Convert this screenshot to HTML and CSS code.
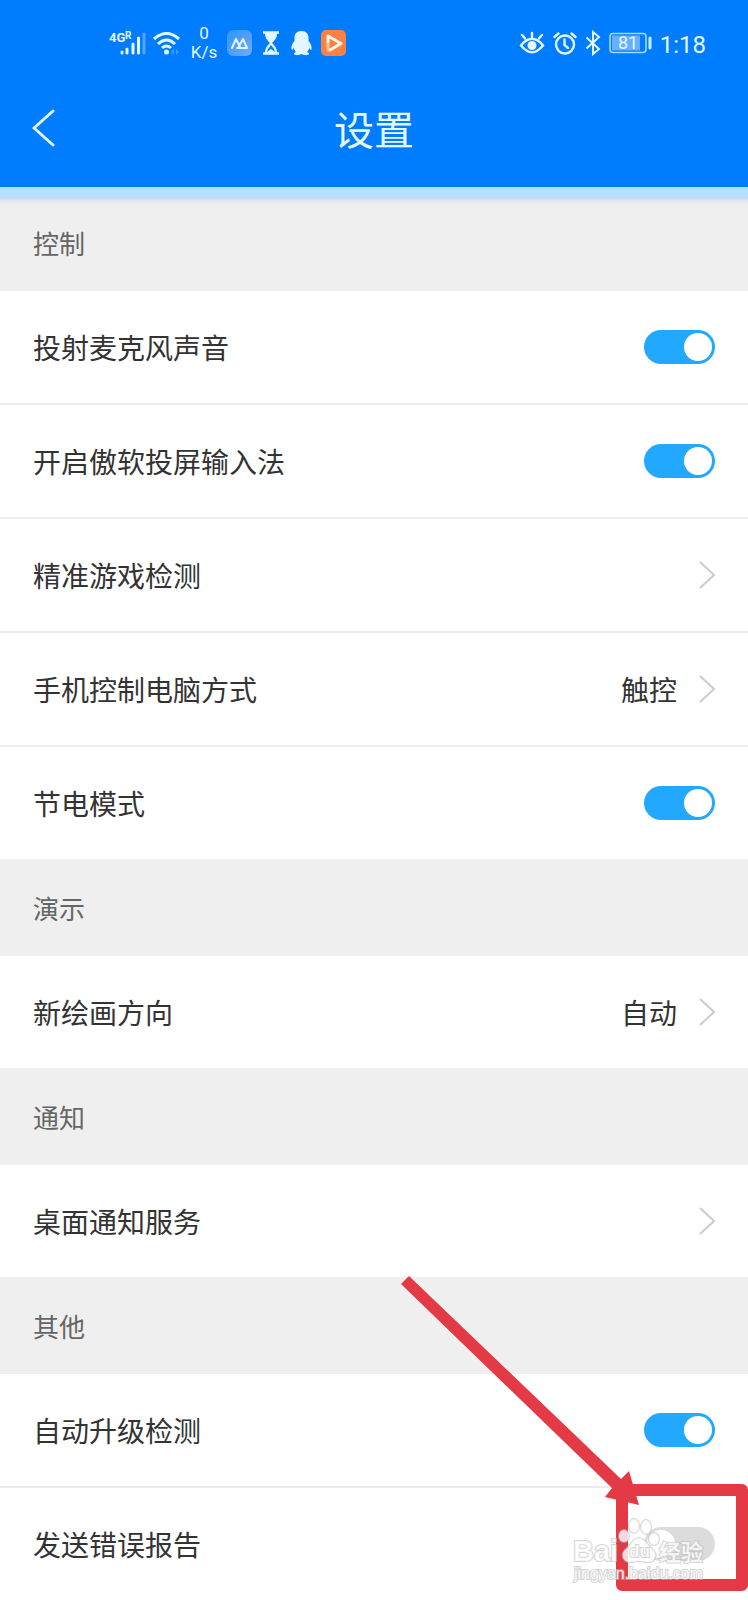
FILE: index.html
```html
<!DOCTYPE html>
<html lang="zh-CN">
<head>
    <meta charset="UTF-8">
    <meta name="viewport" content="width=device-width, initial-scale=1">
    <title>设置</title>
    <link rel="stylesheet" href="styles.css">
</head>
<body>
<div class="page">
    <header class="header">
        <!--状态栏-->
        <div class="status_bar">
            <div class="status_left">
                <svg class="signal" width="40" height="28" viewBox="0 0 40 28">
                    <text x="1" y="13" class="net_text">4G</text>
                    <text x="17" y="10" class="r_text">R</text>
                    <g stroke="#e3f7ff" stroke-width="3" stroke-linecap="round">
                        <path d="M14 23v1M19 20v4M25 15v9M30.500 9v15"/>
                        <path d="M36 5v19" opacity=".35"/>
                    </g>
                </svg>
                <svg class="wifi" width="28" height="28" viewBox="0 0 28 28">
                    <g fill="none" stroke="#e3f7ff" stroke-width="3">
                        <path d="M1 10Q13.500-1 26 10"/>
                        <path d="M5 15Q13.500 7 22 15"/>
                        <path d="M9 19Q13.500 15 18 19"/>
                    </g>
                    <circle cx="13.500" cy="23" r="2.500" fill="#e3f7ff"/>
                    <path d="M21 20v6l-3-3zM23 20v6l3-3z" fill="#3d9dff"/>
                </svg>
                <div class="speed"><span>0</span><span>K/s</span></div>
                <svg class="app" width="25" height="26" viewBox="0 0 25 26">
                    <defs>
                        <linearGradient id="blueApp" x1="0" y1="0" x2="1" y2="1">
                            <stop offset="0" stop-color="#2b95ff"/>
                            <stop offset="1" stop-color="#76a8ff"/>
                        </linearGradient>
                    </defs>
                    <rect width="25" height="26" rx="6" fill="url(#blueApp)"/>
                    <path d="M5 18L9 9l4 8M10 18h10L16 9l-5 9" fill="none" stroke="#e3f3ff" stroke-width="2" stroke-linejoin="round" stroke-linecap="round"/>
                </svg>
                <svg class="hourglass" width="18" height="24" viewBox="0 0 18 24">
                    <path d="M1 1.500h16M1 22.500h16" stroke="#e3f7ff" stroke-width="2.500"/>
                    <path d="M3 2h12c0 5-2 7-5 10 3 3 5 5 5 10H3c0-5 2-7 5-10C5 9 3 7 3 2z" fill="#e3f7ff"/>
                    <path d="M9 14l-3 4-1 3 4-3 4 3-1-3z" fill="#007cff"/>
                </svg>
                <svg class="penguin" width="21" height="26" viewBox="0 0 21 26">
                    <path d="M10.500 1C5.500 1 3.500 4 3.500 8v3C1.500 13 0 16 .5 19c.2 1.500 1 1 2.300-1 .4 1.800 1.200 3 2.200 4-1.500.5-2.300 1.200-2 2 .5 1.500 5 1.500 7.500 0 2.500 1.500 7 1.500 7.500 0 .3-.8-.5-1.500-2-2 1-1 1.800-2.200 2.200-4 1.300 2 2.100 2.500 2.300 1 .5-3-1-6-3-8V8c0-4-2-7-7-7z" fill="#e3f7ff"/>
                </svg>
                <svg class="app" width="25" height="26" viewBox="0 0 25 26">
                    <rect width="25" height="26" rx="5" fill="#fb8144"/>
                    <path d="M7 12V6l13 7.500L9 20" fill="none" stroke="#fff4e8" stroke-width="3" stroke-linejoin="round" stroke-linecap="round"/>
                    <path d="M7 14v6" stroke="#ffc49c" stroke-width="3" stroke-linecap="round"/>
                </svg>
            </div>
            <div class="status_right">
                <svg class="eye" width="26" height="26" viewBox="0 0 26 26">
                    <g fill="none" stroke="#e3f7ff" stroke-width="2.400" stroke-linecap="round">
                        <path d="M2 15.500Q13 2 24 15.500 13 29 2 15.500z"/>
                        <path d="M13 7V3M6 8.500L3 5M20 8.500L23 5"/>
                    </g>
                    <circle cx="13" cy="15.500" r="4.500" fill="#e3f7ff"/>
                </svg>
                <svg class="alarm" width="24" height="26" viewBox="0 0 24 26">
                    <g fill="none" stroke="#e3f7ff" stroke-width="2.400" stroke-linecap="round">
                        <circle cx="12" cy="14.500" r="9"/>
                        <path d="M1.500 7l4-3.500M22.500 7l-4-3.500M11.500 9.500V15l3.500 3"/>
                    </g>
                </svg>
                <svg class="bluetooth" width="16" height="26" viewBox="0 0 16 26">
                    <path d="M1.500 7.500L14 19l-6 5V2l6 5L1.500 18.500" fill="none" stroke="#e3f7ff" stroke-width="2"/>
                </svg>
                <svg class="battery" width="43" height="22" viewBox="0 0 43 22">
                    <rect x="1" y="1.500" width="36" height="19" rx="3" fill="none" stroke="#9fdcff" stroke-width="1.600"/>
                    <rect x="3" y="3.500" width="28" height="15" fill="#66b0ff"/>
                    <path d="M41 6v10" stroke="#c6edff" stroke-width="3" stroke-linecap="round"/>
                    <text x="19" y="17" text-anchor="middle" class="battery_text">81</text>
                </svg>
                <time class="time">1:18</time>
            </div>
        </div>
        <!--标题栏-->
        <div class="title_bar">
            <button class="back" type="button" aria-label="返回">
                <svg width="24" height="38" viewBox="0 0 24 38">
                    <path d="M21 2L2 19 21 36" fill="none" stroke="#e0f5ff" stroke-width="3" stroke-linecap="round" stroke-linejoin="round"/>
                </svg>
            </button>
            <h1>设置</h1>
        </div>
    </header>

    <main>
        <h2 class="section_title first">控制</h2>
        <ul class="list">
            <li>
                <label for="mic">投射麦克风声音</label>
                <input type="checkbox" class="switch" id="mic" checked>
            </li>
            <li>
                <label for="ime">开启傲软投屏输入法</label>
                <input type="checkbox" class="switch" id="ime" checked>
            </li>
            <li>
                <a href="#">
                    <span>精准游戏检测</span>
                    <svg class="arrow" width="16" height="28" viewBox="0 0 16 28"><path d="M1 1l14 13L1 27"/></svg>
                </a>
            </li>
            <li>
                <a href="#">
                    <span>手机控制电脑方式</span>
                    <span class="value">触控</span>
                    <svg class="arrow" width="16" height="28" viewBox="0 0 16 28"><path d="M1 1l14 13L1 27"/></svg>
                </a>
            </li>
            <li>
                <label for="power">节电模式</label>
                <input type="checkbox" class="switch" id="power" checked>
            </li>
        </ul>

        <h2 class="section_title">演示</h2>
        <ul class="list">
            <li>
                <a href="#">
                    <span>新绘画方向</span>
                    <span class="value">自动</span>
                    <svg class="arrow" width="16" height="28" viewBox="0 0 16 28"><path d="M1 1l14 13L1 27"/></svg>
                </a>
            </li>
        </ul>

        <h2 class="section_title">通知</h2>
        <ul class="list">
            <li>
                <a href="#">
                    <span>桌面通知服务</span>
                    <svg class="arrow" width="16" height="28" viewBox="0 0 16 28"><path d="M1 1l14 13L1 27"/></svg>
                </a>
            </li>
        </ul>

        <h2 class="section_title">其他</h2>
        <ul class="list">
            <li>
                <label for="update">自动升级检测</label>
                <input type="checkbox" class="switch" id="update" checked>
            </li>
            <li>
                <label for="report">发送错误报告</label>
                <input type="checkbox" class="switch" id="report">
            </li>
        </ul>
    </main>

    <!--红色标注和水印，盖在列表上面-->
    <svg class="mark" width="358" height="340" viewBox="0 0 358 340">
        <rect x="232" y="230" width="120" height="95" fill="none" stroke="#e43a46" stroke-width="12" stroke-linejoin="round"/>
        <path d="M11 24l8-8 212 203 8-8 10 34-34-8 7-9z" fill="#e43a46"/>
        <g class="watermark">
            <text x="183" y="301" class="wm_big">Bai</text>
            <ellipse cx="234" cy="276" rx="5" ry="6"/>
            <ellipse cx="244" cy="266" rx="5" ry="7"/>
            <ellipse cx="256" cy="267" rx="5" ry="7"/>
            <ellipse cx="264" cy="279" rx="5" ry="6"/>
            <path d="M249 278c-6 0-8 7-13 11-6 5-3 13 4 13 4 0 6-1 9-1s5 1 9 1c8 0 10-8 4-13-5-4-7-11-13-11z"/>
            <text x="239" y="297" class="wm_du">du</text>
            <text x="269" y="300" class="wm_cn">经验</text>
            <text x="184" y="319" class="wm_url">jingyan.baidu.com</text>
        </g>
    </svg>
</div>
</body>
</html>
```
FILE: styles.css
```css
*{
    margin: 0;
    padding: 0;
    box-sizing: border-box;
    list-style: none;
}
body{
    font-family: "Noto Sans CJK SC", sans-serif;
    background: #fff;
    color: #333;
}
.page{
    position: relative;
    overflow: hidden;
}
svg{
    display: block;
    flex: none;
}
.header{
    background: #007cff;
    color: #e6f8ff;
}

/* 状态栏 */
.status_bar{
    display: flex;
    justify-content: space-between;
    align-items: center;
    height: 86px;
    padding: 0 42px 0 108px;
    font-family: Roboto, sans-serif;
}
.status_left,
.status_right{
    display: flex;
    align-items: center;
}
.wifi{
    margin-left: 5px;
}
.speed{
    display: flex;
    flex-direction: column;
    align-items: center;
    width: 28px;
    margin: 0 9px;
    font-size: 17px;
    line-height: 19px;
}
.hourglass{
    margin: 0 11px 0 10px;
}
.penguin{
    margin-right: 9px;
}
.status_right{
    gap: 8px;
}
.time{
    padding-top: 3px;
    font-size: 24px;
    line-height: 30px;
}
.net_text,
.r_text,
.battery_text{
    fill: #e3f7ff;
}
.net_text{
    font-size: 13px;
    font-weight: bold;
}
.r_text{
    font-size: 10px;
    font-weight: bold;
}
.battery_text{
    font-size: 18px;
}

/* 标题栏 */
.title_bar{
    display: grid;
    grid-template-columns: 60px 1fr 60px;
    align-items: center;
    height: 101px;
    padding-bottom: 17px;
}
.back{
    width: 60px;
    height: 60px;
    padding-left: 32px;
    background: none;
    border: none;
}
.title_bar h1{
    font-size: 40px;
    line-height: 60px;
    font-weight: normal;
    text-align: center;
}

/* 列表 */
.section_title{
    height: 97px;
    padding: 0 33px;
    background: #efefef;
    color: #666;
    font-size: 26px;
    line-height: 97px;
    font-weight: normal;
}
.first{
    height: 104px;
    padding-top: 7px;
    background: linear-gradient(#b3e0ff 9px, #c3dcee 11px, #e6e8f0 14px, #efefef 18px);
}
.list li{
    display: flex;
    align-items: center;
    justify-content: space-between;
    height: 114px;
    padding: 0 33px;
    border-bottom: 2px solid #ececec;
    font-size: 28px;
    line-height: 42px;
}
.list li:last-child{
    height: 112px;
    border-bottom: none;
}
.list a{
    flex: 1;
    display: flex;
    align-items: center;
    color: #333;
    text-decoration: none;
}
.value{
    margin-left: auto;
    margin-right: 22px;
}
.arrow{
    margin-left: auto;
    fill: none;
    stroke: #ccc;
    stroke-width: 2;
}
.value + .arrow{
    margin-left: 0;
}
.switch{
    appearance: none;
    display: flex;
    width: 71px;
    height: 34px;
    padding: 3px;
    border-radius: 17px;
    background: #dcdcdc;
}
.switch::before{
    content: "";
    width: 28px;
    height: 28px;
    border-radius: 50%;
    background: #fff;
}
.switch:checked{
    justify-content: flex-end;
    background: #23a8ff;
}

/* 标注 */
.mark{
    position: absolute;
    right: 0;
    bottom: 0;
    pointer-events: none;
}
.watermark{
    fill: #fff;
    fill-opacity: 0.8;
    stroke: #bbb;
    stroke-opacity: 0.6;
    stroke-width: 2;
    paint-order: stroke;
    font-family: "Liberation Sans", "Noto Sans CJK SC", sans-serif;
}
.wm_big{
    font-size: 29px;
    font-weight: bold;
}
.wm_du{
    font-size: 17px;
    font-weight: bold;
}
.wm_cn{
    font-size: 22px;
    font-weight: bold;
}
.wm_url{
    font-size: 16px;
}
```
